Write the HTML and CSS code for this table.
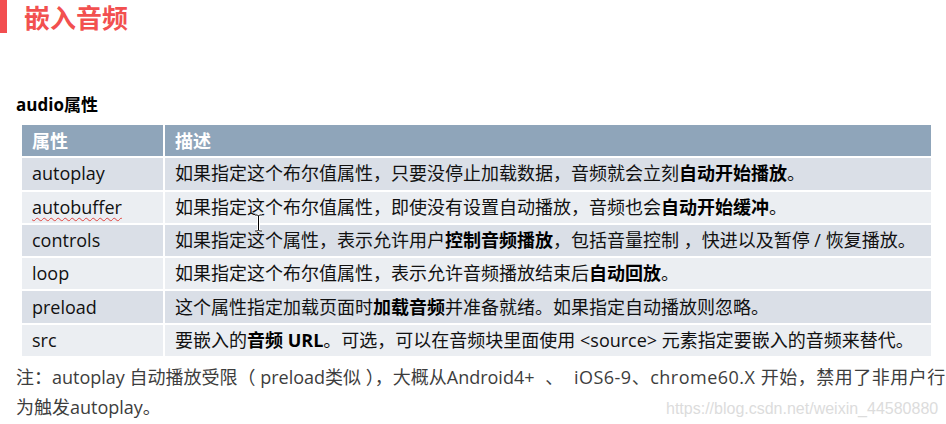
FILE: index.html
```html
<!DOCTYPE html>
<html lang="zh-CN">
<head>
  <meta charset="utf-8">
  <title>嵌入音频</title>
  <link rel="stylesheet" href="styles.css">
</head>
<body>
  <div class="heading">
    <span class="bar"></span>
    <h1>嵌入音频</h1>
  </div>

  <h4 class="subtitle">audio属性</h4>

  <table class="attrs">
    <tr class="head">
      <th class="name">属性</th>
      <th>描述</th>
    </tr>
    <tr class="dark">
      <td class="name">autoplay</td>
      <td>如果指定这个布尔值属性，只要没停止加载数据，音频就会立刻<b>自动开始播放</b>。</td>
    </tr>
    <tr class="light">
      <td class="name"><span class="squiggle">autobuffer</span></td>
      <td>如果指定这个布尔值属性，即使没有设置自动播放，音频也会<b>自动开始缓冲</b>。</td>
    </tr>
    <tr class="dark">
      <td class="name">controls</td>
      <td>如果指定这个属性，表示允许用户<b>控制音频播放</b>，包括音量控制 ，快进以及暂停 / 恢复播放。</td>
    </tr>
    <tr class="light">
      <td class="name">loop</td>
      <td>如果指定这个布尔值属性，表示允许音频播放结束后<b>自动回放</b>。</td>
    </tr>
    <tr class="dark">
      <td class="name">preload</td>
      <td>这个属性指定加载页面时<b>加载音频</b>并准备就绪。如果指定自动播放则忽略。</td>
    </tr>
    <tr class="light">
      <td class="name">src</td>
      <td>要嵌入的<b>音频 URL</b>。可选，可以在音频块里面使用 &lt;source&gt; 元素指定要嵌入的音频来替代。</td>
    </tr>
  </table>

  <div class="note">
    <div>注：autoplay 自动播放受限（ preload类似 ），大概从Android4+ <span class="sep">、</span> <span class="wide">iOS6-9、chrome60.X 开始，禁用了非用户行</span></div>
    <div>为触发autoplay。</div>
  </div>

  <div class="watermark">https://blog.csdn.net/weixin_44580880</div>

  <svg class="ibeam" width="9" height="18" viewBox="0 0 9 18">
    <path d="M1 1h2.5l1 1 1-1H8M4.5 2v14M1 17h2.5l1-1 1 1H8" fill="none" stroke="#fff" stroke-width="3"/>
    <path d="M1 1h2.5l1 1 1-1H8M4.5 2v14M1 17h2.5l1-1 1 1H8" fill="none" stroke="#000" stroke-width="1"/>
  </svg>
</body>
</html>
```

FILE: styles.css
```css
body {
  margin: 0;
  background: #fff;
  font-family: "Open Sans", "Noto Sans CJK SC", sans-serif;
  color: #111;
  width: 946px;
  height: 424px;
  overflow: hidden;
  position: relative;
}

.heading {
  display: flex;
  align-items: center;
  height: 33px;
}
.bar {
  width: 7px;
  height: 33px;
  background: #f24e50;
}
.heading h1 {
  margin: 0 0 0 17px;
  font-family: "Noto Sans CJK SC", sans-serif;
  font-size: 26px;
  font-weight: 700;
  color: #f2504f;
  line-height: 1;
}

.subtitle {
  margin: 60px 0 0 16px;
  font-size: 17px;
  font-weight: 700;
  line-height: 24px;
  color: #000;
}

.attrs {
  border-collapse: separate;
  border-spacing: 2px;
  margin: 6px 0 0 20px;
  width: 913px;
  font-size: 18px;
}
.attrs th,
.attrs td {
  height: 31.3px;
  padding: 0 0 0 10px;
  text-align: left;
  white-space: nowrap;
  line-height: 31px;
}
.attrs .name {
  width: 131px;
}
.attrs th {
  background: #8fa5ba;
  color: #fff;
  font-weight: 700;
  font-family: "Noto Sans CJK SC", sans-serif;
  font-size: 18px;
}
.attrs .dark td {
  background: #dadfe7;
}
.attrs .light td {
  background: #ebeef2;
}
.attrs b {
  font-weight: 700;
  color: #000;
}
.squiggle {
  text-decoration: underline wavy #e0443e;
  text-decoration-thickness: 1px;
  text-underline-offset: 3px;
}

.note {
  margin: 4px 0 0 16px;
  font-size: 18px;
  line-height: 30px;
  color: #3d3d3d;
  white-space: nowrap;
}
.note .sep {
  margin: 0 6px;
}
.note .wide {
  letter-spacing: 0.5px;
}

.watermark {
  position: absolute;
  left: 666px;
  top: 400px;
  font-family: "Liberation Sans", Arial, sans-serif;
  font-size: 16px;
  color: #dcdcdc;
}

.ibeam {
  position: absolute;
  left: 254px;
  top: 214px;
}
```
